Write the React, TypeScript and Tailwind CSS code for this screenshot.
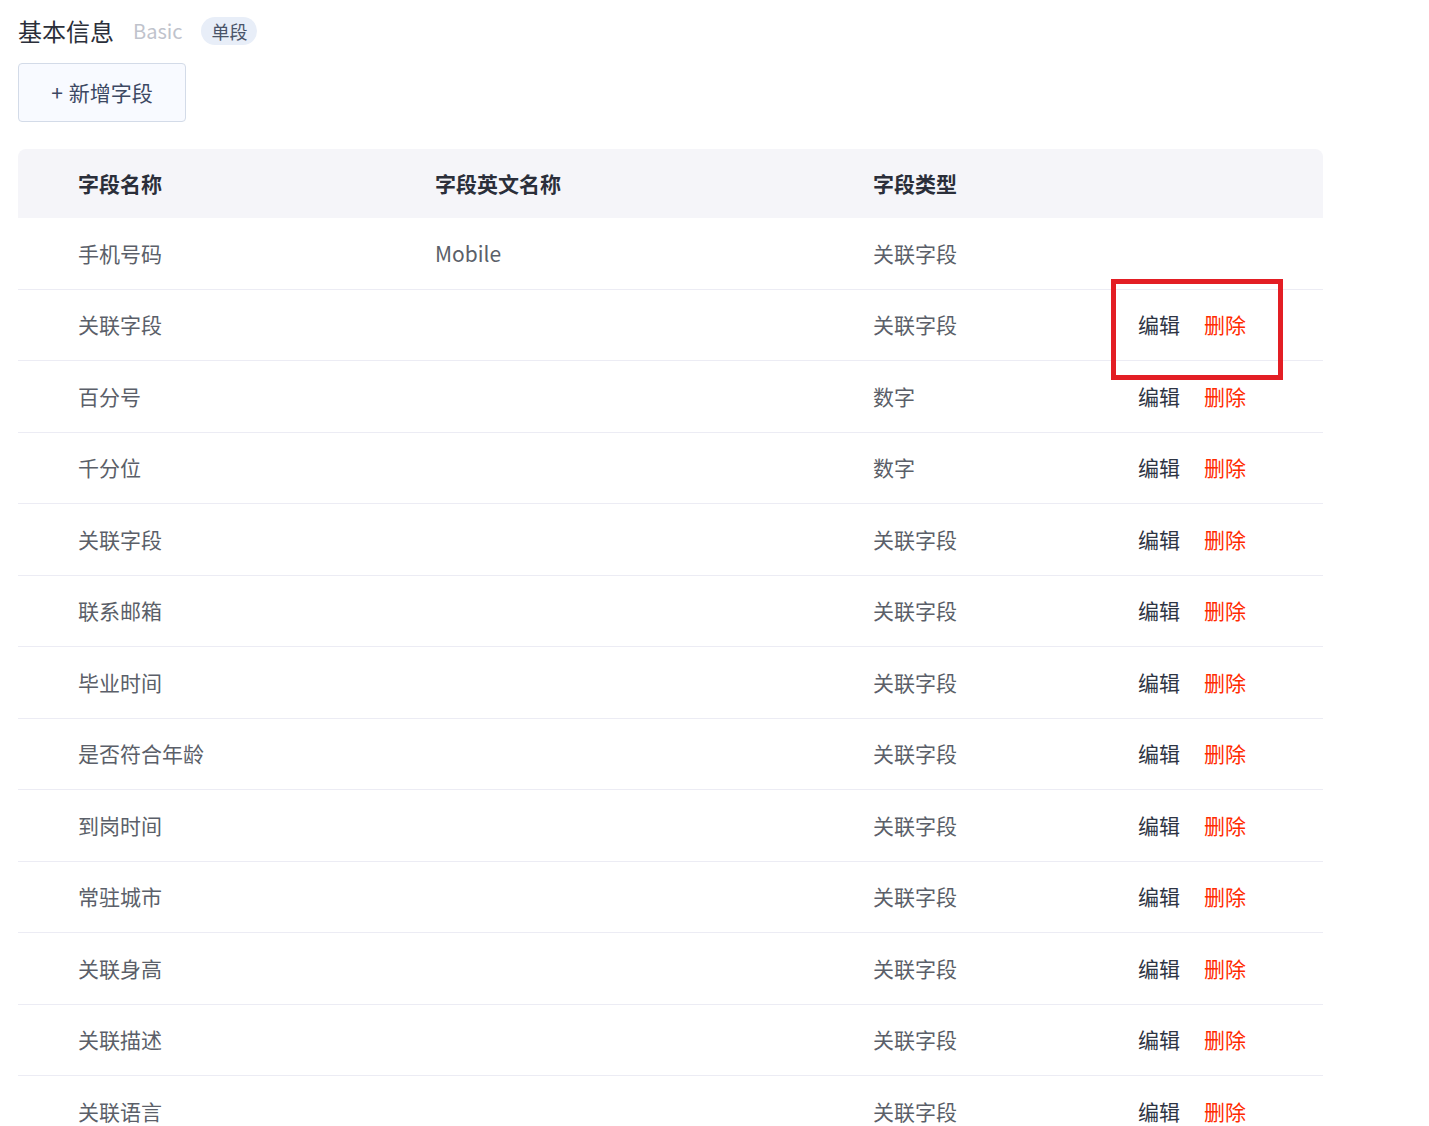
const rows = [
  { name: '手机号码', en: 'Mobile', type: '关联字段', actions: false },
  { name: '关联字段', en: '', type: '关联字段', actions: true },
  { name: '百分号', en: '', type: '数字', actions: true },
  { name: '千分位', en: '', type: '数字', actions: true },
  { name: '关联字段', en: '', type: '关联字段', actions: true },
  { name: '联系邮箱', en: '', type: '关联字段', actions: true },
  { name: '毕业时间', en: '', type: '关联字段', actions: true },
  { name: '是否符合年龄', en: '', type: '关联字段', actions: true },
  { name: '到岗时间', en: '', type: '关联字段', actions: true },
  { name: '常驻城市', en: '', type: '关联字段', actions: true },
  { name: '关联身高', en: '', type: '关联字段', actions: true },
  { name: '关联描述', en: '', type: '关联字段', actions: true },
  { name: '关联语言', en: '', type: '关联字段', actions: true },
]

const cols = 'grid grid-cols-[357px_438px_265px_1fr] items-center pl-[60px]'

export default function App() {
  return (
    <div className="relative min-h-[1126px] w-[1429px] bg-white font-['Microsoft_YaHei','Noto_Sans_CJK_SC',sans-serif]">
      <div className="px-[18px] pt-[14px]">
        {/* Section title */}
        <div className="flex items-center h-[34px]">
          <span className="text-[24px] leading-none text-[#2b2f3a]">基本信息</span>
          <span className="ml-[19px] text-[20px] leading-none text-[#bfc3cc]">Basic</span>
          <span className="ml-[19px] rounded-full bg-[#e8eef8] px-[10px] py-[5px] text-[18px] leading-none text-[#4a5468]">
            单段
          </span>
        </div>

        <button className="mt-[15px] flex h-[59px] w-[168px] items-center justify-center rounded-[4px] border border-[#d3dbe8] bg-[#f8faff] text-[21px] text-[#3c4863]">
          <span className="mr-[6px]">+</span>新增字段
        </button>

        {/* Field table */}
        <div className="mt-[27px] w-[1305px]">
          <div className={`${cols} h-[69px] rounded-t-[8px] bg-[#f5f5f9] text-[21px] font-bold text-[#2b2f3a]`}>
            <div>字段名称</div>
            <div>字段英文名称</div>
            <div>字段类型</div>
            <div></div>
          </div>
          {rows.map((r, i) => (
            <div
              key={i}
              className={`${cols} h-[71.5px] border-b border-[#ececf4] text-[21px] text-[#5b5f69]`}
            >
              <div>{r.name}</div>
              <div>{r.en}</div>
              <div>{r.type}</div>
              <div className="flex gap-[24px]">
                {r.actions && (
                  <>
                    <span className="text-[#2e3544]">编辑</span>
                    <span className="text-[#ff2a00]">删除</span>
                  </>
                )}
              </div>
            </div>
          ))}
        </div>
      </div>

      {/* Highlight box over the second row actions */}
      <div className="absolute left-[1111px] top-[279px] h-[101px] w-[172px] border-[5px] border-[#e31e24]" />
    </div>
  )
}
